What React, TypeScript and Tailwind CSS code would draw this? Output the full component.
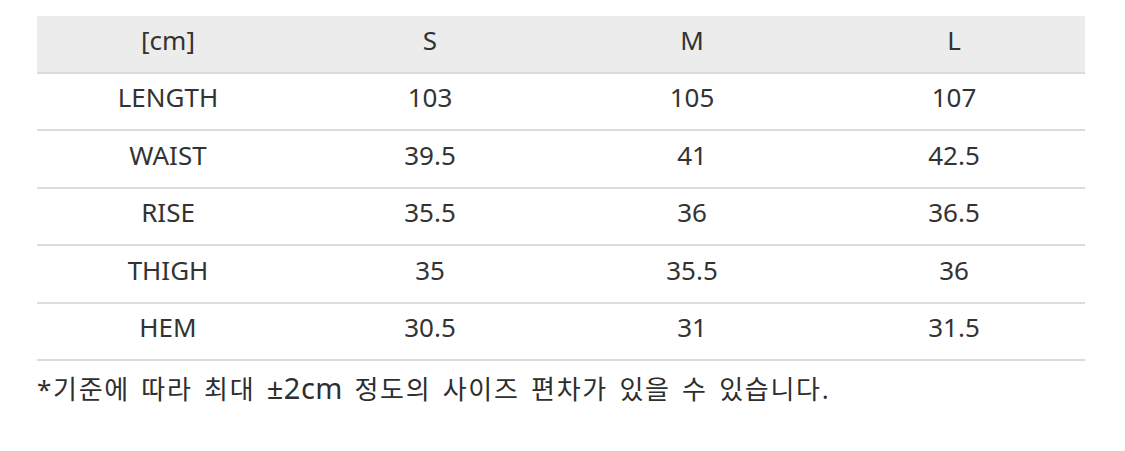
import React from "react";

const rows: string[][] = [
  ["LENGTH", "103", "105", "107"],
  ["WAIST", "39.5", "41", "42.5"],
  ["RISE", "35.5", "36", "36.5"],
  ["THIGH", "35", "35.5", "36"],
  ["HEM", "30.5", "31", "31.5"],
];

export default function App() {
  return (
    <div
      className="w-[1125px] h-[451px] bg-white text-[#333333] pt-[16px] px-[37px]"
      style={{ fontFamily: '"Noto Sans", "Noto Sans CJK KR", sans-serif' }}
    >
      <div className="w-[1048px]">
        <div className="grid grid-cols-4 h-[57.5px] pb-[7px] bg-[#ececec] border-b-2 border-[#dadada] text-[26px] items-center text-center">
          <div>[cm]</div>
          <div>S</div>
          <div>M</div>
          <div>L</div>
        </div>
        {rows.map((r) => (
          <div
            key={r[0]}
            className="grid grid-cols-4 h-[57.5px] pb-[7px] border-b-2 border-[#dcdcdc] text-[26px] items-center text-center"
          >
            {r.map((c, i) => (
              <div key={i}>{c}</div>
            ))}
          </div>
        ))}
        <div className="mt-[8px] text-[26px] leading-[38px] text-left text-[#2e2e2e] tracking-[1.7px] [word-spacing:3px]">
          *기준에 따라 최대 <span className="text-[29px] tracking-[0.5px]">±2cm</span> 정도의 사이즈 편차가 있을 수 있습니다.
        </div>
      </div>
    </div>
  );
}
